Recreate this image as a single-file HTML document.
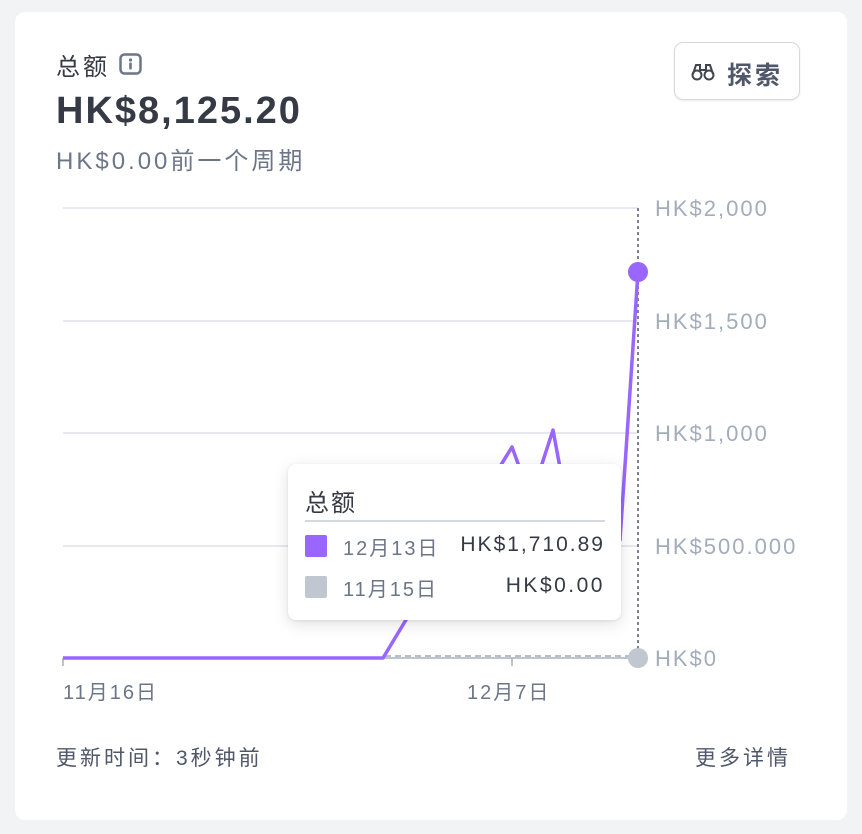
<!DOCTYPE html>
<html><head><meta charset="utf-8"><style>
body{margin:0;width:862px;height:834px;background:#f2f3f5;font-family:"Liberation Sans","Noto Sans CJK SC",sans-serif;position:relative;overflow:hidden}
.card{position:absolute;left:15px;top:12px;width:832px;height:808px;background:#fff;border-radius:10px}
.t{position:absolute;white-space:nowrap}
</style></head><body>
<div class="card"></div>
<div class="t" style="left:56px;top:47px;font-size:24px;letter-spacing:3px;color:#353a44">总额</div>
<svg style="position:absolute;left:119px;top:53px" width="24" height="22" viewBox="0 0 24 22"><rect x="1.5" y="1.5" width="20" height="19" rx="4" fill="none" stroke="#6c7688" stroke-width="2.5"/><circle cx="11.5" cy="7" r="1.6" fill="#6c7688"/><rect x="10.2" y="9.5" width="2.6" height="7" rx="1" fill="#6c7688"/></svg>
<div class="t" style="left:56px;top:90px;font-size:38px;letter-spacing:2px;font-weight:bold;color:#353a44">HK$8,125.20</div>
<div class="t" style="left:56px;top:141px;font-size:24px;letter-spacing:3px;color:#6c7688">HK$0.00前一个周期</div>
<div style="position:absolute;left:674px;top:42px;width:124px;height:56px;border:1.5px solid #d5d9de;border-radius:9px;box-shadow:0 1px 2px rgba(0,0,0,.08)"></div>
<svg style="position:absolute;left:691px;top:62px" width="24" height="20" viewBox="0 0 24 20"><g fill="none" stroke="#414552" stroke-width="2"><circle cx="6" cy="13" r="4.5"/><circle cx="18" cy="13" r="4.5"/><path d="M2 12 L5 3 H9 V9 M22 12 L19 3 H15 V9 M9 8 H15"/></g></svg>
<div class="t" style="left:727px;top:56px;font-size:25px;letter-spacing:3px;color:#50576a;font-weight:bold">探索</div>
<svg style="position:absolute;left:0;top:0" width="862" height="834">
<g stroke="#dfe2e8" stroke-width="1.5"><line x1="63" y1="208" x2="638" y2="208"/><line x1="63" y1="321" x2="638" y2="321"/><line x1="63" y1="433" x2="638" y2="433"/><line x1="63" y1="546" x2="638" y2="546"/></g>
<line x1="63" y1="658" x2="638" y2="658" stroke="#a8b0bd" stroke-width="1.5"/>
<line x1="512" y1="658" x2="512" y2="666" stroke="#a8b0bd" stroke-width="1.5"/>
<line x1="63" y1="658" x2="63" y2="666" stroke="#a8b0bd" stroke-width="1.5"/>
<line x1="385" y1="656" x2="638" y2="656" stroke="#b8bfca" stroke-width="2" stroke-dasharray="6,4"/>
<line x1="638" y1="208" x2="638" y2="658" stroke="#7c8194" stroke-width="2" stroke-dasharray="3,3"/>
<polyline points="63,658 383,658 430,580 512,447 524,480 540,470 553,430 566,500 620,540 638,272" fill="none" stroke="#9966ff" stroke-width="3.5" stroke-linejoin="round"/>
<circle cx="638" cy="272" r="10" fill="#9966ff"/>
<circle cx="638" cy="658" r="10" fill="#c0c7d1"/>
<g font-size="22" letter-spacing="2" fill="#a3acba" font-family="Liberation Sans, sans-serif">
<text x="655" y="216">HK$2,000</text><text x="655" y="329">HK$1,500</text><text x="655" y="441">HK$1,000</text><text x="655" y="554">HK$500.000</text><text x="655" y="666">HK$0</text></g>
<g font-size="20" letter-spacing="2" fill="#6c7688"><text x="63" y="699">11月16日</text><text x="467" y="699">12月7日</text></g>
</svg>
<div style="position:absolute;left:288px;top:464px;width:333px;height:156px;background:#fff;border-radius:8px;box-shadow:0 4px 16px rgba(0,0,0,.12),0 1px 3px rgba(0,0,0,.08)"></div>
<div class="t" style="left:305px;top:483px;font-size:24px;letter-spacing:2px;color:#353a44">总额</div>
<div style="position:absolute;left:305px;top:520px;width:300px;height:1.5px;background:#d5d9de"></div>
<div style="position:absolute;left:305px;top:535px;width:22px;height:22px;background:#9966ff;border-radius:2px"></div>
<div style="position:absolute;left:305px;top:576px;width:22px;height:22px;background:#c0c7d1;border-radius:2px"></div>
<div class="t" style="left:343px;top:532px;font-size:20px;letter-spacing:2px;color:#6c7688">12月13日</div>
<div class="t" style="left:343px;top:573px;font-size:20px;letter-spacing:2px;color:#6c7688">11月15日</div>
<div class="t" style="right:257px;top:533px;font-size:21px;letter-spacing:2px;color:#353a44">HK$1,710.89</div>
<div class="t" style="right:257px;top:574px;font-size:21px;letter-spacing:2.5px;color:#353a44">HK$0.00</div>
<div class="t" style="left:56px;top:742px;font-size:21px;letter-spacing:3px;color:#50576a">更新时间：3秒钟前</div>
<div class="t" style="left:695px;top:742px;font-size:21px;letter-spacing:3px;color:#50576a">更多详情</div>
</body></html>
